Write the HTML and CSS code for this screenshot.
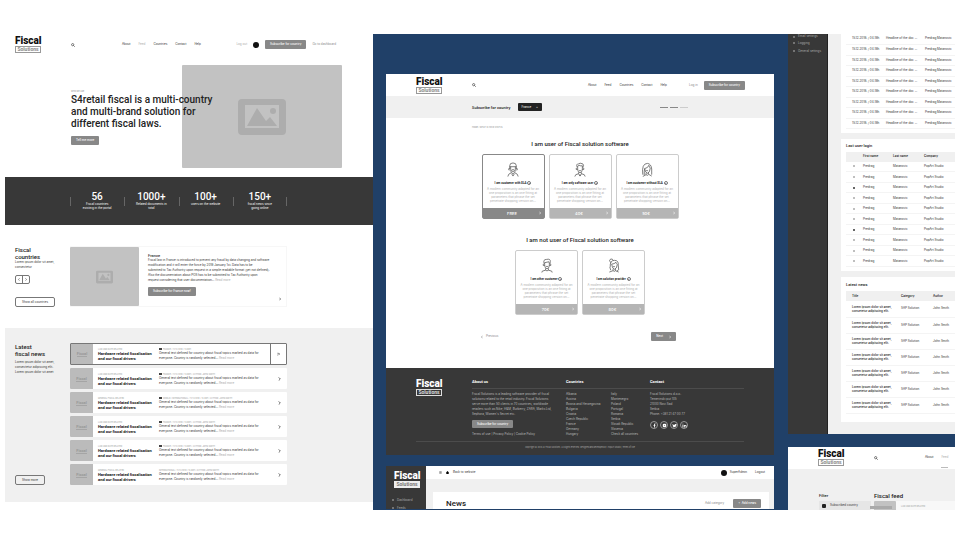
FILE: index.html
```html
<!DOCTYPE html>
<html lang="en">
<head>
<meta charset="utf-8">
<meta name="viewport" content="width=device-width, initial-scale=1">
<title>Fiscal Solutions</title>
<link rel="stylesheet" href="styles.css">
</head>
<body>
<svg class="sprite" aria-hidden="true">
  <symbol id="search" viewBox="0 0 10 10"><circle cx="4.2" cy="4.2" r="2.8" fill="none" stroke="currentColor" stroke-width="1.6"/><path d="M6.4 6.4 9.2 9.2" stroke="currentColor" stroke-width="1.8"/></symbol>
  <symbol id="picture" viewBox="0 0 48 36"><path fill="currentColor" fill-rule="evenodd" d="M4 0h40a4 4 0 0 1 4 4v28a4 4 0 0 1-4 4H4a4 4 0 0 1-4-4V4a4 4 0 0 1 4-4ZM7 6v23h34V6Z"/><path fill="currentColor" d="M9 27 19 9l9 13 4-4 7 9Z"/><circle cx="35" cy="12" r="3" fill="currentColor"/></symbol>
  <symbol id="chevron" viewBox="0 0 6 10"><path d="m1 1 4 4-4 4" fill="none" stroke="currentColor" stroke-width="1.8"/></symbol>
  <symbol id="double" viewBox="0 0 10 10"><path d="m1 1 4 4-4 4M5 1l4 4-4 4" fill="none" stroke="currentColor" stroke-width="1.8"/></symbol>
  <symbol id="back" viewBox="0 0 6 10"><path d="M5 1 1 5l4 4" fill="none" stroke="currentColor" stroke-width="1.8"/></symbol>
  <symbol id="beard" viewBox="0 0 24 32"><g fill="none" stroke="currentColor" stroke-width="1.6"><path d="M5 15V8q0-6 7-6t7 6v7M5 10h14M7 10v6q0 8 5 9 5-1 5-9v-6M8 18q4-4 8 0M10 20h4M8 23l-5 3-2 5M16 23l5 3 2 5M9 25l3 5 3-5M5 14H3v3h2M19 14h2v3h-2"/></g></symbol>
  <symbol id="man" viewBox="0 0 24 32"><g fill="none" stroke="currentColor" stroke-width="1.6"><path d="M6 11Q3 4 9 4q2-3 9 0 3 2 0 8M7 9l3-2q4 2 7 1v7q0 7-5 8-5-1-5-8ZM5 13H4v3h3M19 13h1v3h-3M10 18q2 2 4 0M9 22v3l-6 2-2 4M15 22v3l6 2 2 4M9 25l3 5 3-5M12 30v-3"/></g></symbol>
  <symbol id="woman" viewBox="0 0 24 32"><g fill="none" stroke="currentColor" stroke-width="1.6"><path d="M3 27Q0 3 13 3q8 1 9 12v12M6 28q0-10 1-14 7-1 9-7 1 4 3 6-1 10-6 11-5-1-6-10M10 23v4l-7 4M15 22v4l7 4M10 27q3 3 5 0M10 18q2 2 4 0"/></g></symbol>
  <symbol id="guy" viewBox="0 0 24 32"><g fill="none" stroke="currentColor" stroke-width="1.6"><path d="M6 12Q3 3 11 3q9-2 8 5l-1 5M7 10l9-2 1 4v3q0 7-5 8-5-1-5-8ZM5 13H4v3h3M19 13h1v3h-3M10 18h4M9 22v4l-7 2-1 3M15 22v4l7 2 1 3M9 26q3 3 6 0"/></g></symbol>
  <symbol id="bun" viewBox="0 0 24 32"><g fill="none" stroke="currentColor" stroke-width="1.6"><path d="M5 10Q0 5 5 2q5 0 5 3M4 19Q3 5 13 5q9 0 8 10l1 10-4 3M7 13q6 0 9-4 1 4 3 5-1 9-6 10-5-1-6-11ZM10 23v4l-8 3M15 23v4l7 3M10 27q3 3 5 0M10 18q2 2 4 0M3 19l2 7"/></g></symbol>
</svg>

<main class="collage">
  <div class="page home">
    <header class="home-head">
      <a class="logo" href="#"><b>Fiscal</b><span>Solutions</span></a>
      <svg class="i-search" role="img" aria-label="Search"><use href="#search"/></svg>
      <nav class="nav"><a href="#">About</a><a class="faded" href="#">Feed</a><a href="#">Countries</a><a href="#">Contact</a><a href="#">Help</a></nav>
      <div class="account"><a class="faded" href="#">Log out</a><span class="avatar"></span><button class="btn">Subscribe for country</button><a class="dim" href="#">Go to dashboard</a></div>
    </header>
    <section class="hero">
      <div class="photo hero-photo"><svg><use href="#picture"/></svg></div>
      <div class="hero-copy">
        <p class="eyebrow">WHO WE ARE</p>
        <h1>S4retail fiscal is a multi-country<br>and multi-brand solution for<br>different fiscal laws.</h1>
        <button class="btn">Tell me more</button>
      </div>
    </section>
    <section class="stats">
      <div><strong>56</strong><p>Fiscal countries<br>existing in the portal</p></div>
      <div><strong>1000+</strong><p>Related documents in<br>total</p></div>
      <div><strong>100+</strong><p>users on the website</p></div>
      <div><strong>150+</strong><p>fiscal news since<br>going online</p></div>
    </section>
    <section class="split countries">
      <div class="aside">
        <h2>Fiscal<br>countries</h2>
        <p>Lorem ipsum dolor sit amet,<br>consectetur</p>
        <div class="pager"><button aria-label="Previous country"><svg><use href="#back"/></svg></button><button aria-label="Next country"><svg><use href="#chevron"/></svg></button></div>
        <button class="outline">Show all countries</button>
      </div>
      <article class="country">
        <div class="photo"><svg><use href="#picture"/></svg></div>
        <div class="country-copy">
          <h3>France</h3>
          <p>Fiscal law in France is introduced to prevent any fraud by data changing and software<br>modification and it will enter the force by 2018 January 1st. Data has to be<br>submitted to Tax Authority upon request in a simple readable format (yet not defined).<br>Also the documentation about POS has to be submitted to Tax Authority upon<br>request considering that user documentation... <a class="faded" href="#">Read more</a></p>
          <button class="btn">Subscribe for France now!</button>
          <svg class="i-chev"><use href="#chevron"/></svg>
        </div>
      </article>
    </section>
    <section class="split news">
      <div class="aside">
        <h2>Latest<br>fiscal news</h2>
        <p>Lorem ipsum dolor sit amet,<br>consectetur adipiscing elit.<br>Lorem ipsum dolor sit amet</p>
        <button class="outline">Show more</button>
      </div>
      <div class="news-list">
        <article class="item active"><div class="thumb"><span>Fiscal</span></div><div><small>LAW AND DATE RELATED</small><h3>Hardware related fiscalisation<br>and our fiscal drivers</h3></div><div><small><i></i>FRANCE / 11/12/2018 / 14:00H</small><p>General text defined for country about fiscal topics marked as data for<br>everyone. Country is randomly selected... <a class="faded" href="#">Read more</a></p></div><span class="go"><svg><use href="#double"/></svg></span></article>
        <article class="item"><div class="thumb"><span>Fiscal</span></div><div><small>LAW AND DATE RELATED</small><h3>Hardware related fiscalisation<br>and our fiscal drivers</h3></div><div><small><i></i>FRANCE / 11/12/2018 / 14:00H / AUTHOR: JOHN SMITH</small><p>General text defined for country about fiscal topics marked as data for<br>everyone. Country is randomly selected... <a class="faded" href="#">Read more</a></p></div><span class="go"><svg><use href="#chevron"/></svg></span></article>
        <article class="item"><div class="thumb"><span>Fiscal</span></div><div><small>GENERAL FISCAL RELATED</small><h3>Hardware related fiscalisation<br>and our fiscal drivers</h3></div><div><small><i></i>WORLD / INTERNATIONAL / 11/12/2018 / 14:00H / AUTHOR: JOHN SMITH</small><p>General text defined for country about fiscal topics marked as data for<br>everyone. Country is randomly selected... <a class="faded" href="#">Read more</a></p></div><span class="go"><svg><use href="#chevron"/></svg></span></article>
        <article class="item"><div class="thumb"><span>Fiscal</span></div><div><small>LAW AND DATE RELATED</small><h3>Hardware related fiscalisation<br>and our fiscal drivers</h3></div><div><small><i></i>FRANCE / 11/12/2018 / 14:00H / AUTHOR: JOHN SMITH</small><p>General text defined for country about fiscal topics marked as data for<br>everyone. Country is randomly selected... <a class="faded" href="#">Read more</a></p></div><span class="go"><svg><use href="#chevron"/></svg></span></article>
        <article class="item"><div class="thumb"><span>Fiscal</span></div><div><small>LAW AND DATE RELATED</small><h3>Hardware related fiscalisation<br>and our fiscal drivers</h3></div><div><small><i></i>FRANCE / 11/12/2018 / 14:00H / AUTHOR: JOHN SMITH</small><p>General text defined for country about fiscal topics marked as data for<br>everyone. Country is randomly selected... <a class="faded" href="#">Read more</a></p></div><span class="go"><svg><use href="#chevron"/></svg></span></article>
        <article class="item"><div class="thumb"><span>Fiscal</span></div><div><small>GENERAL FISCAL RELATED</small><h3>Hardware related fiscalisation<br>and our fiscal drivers</h3></div><div><small>INTERNATIONAL / 11/12/2018 / 14:00H / AUTHOR: JOHN SMITH</small><p>General text defined for country about fiscal topics marked as data for<br>everyone. Country is randomly selected... <a class="faded" href="#">Read more</a></p></div><span class="go"><svg><use href="#chevron"/></svg></span></article>
      </div>
    </section>
  </div>

  <div class="board">
    <div class="column middle">
      <div class="page subscribe">
        <header class="sub-head">
          <a class="logo" href="#"><b>Fiscal</b><span>Solutions</span></a>
          <svg class="i-search" role="img" aria-label="Search"><use href="#search"/></svg>
          <nav class="nav"><a href="#">About</a><a href="#">Feed</a><a href="#">Countries</a><a href="#">Contact</a><a href="#">Help</a></nav>
          <div class="account"><a class="dim" href="#">Log in</a><button class="btn">Subscribe for country</button></div>
        </header>
        <div class="sub-bar"><h3>Subscribe for country</h3><button class="chip">France <span>×</span></button><div class="steps"><i></i><i></i><i></i></div></div>
        <section class="plans">
          <p class="crumbs">HOME / WHAT IS YOUR STATUS</p>
          <h2>I am user of Fiscal solution software</h2>
          <div class="cards">
            <article class="plan chosen"><svg class="person"><use href="#beard"/></svg><h3>I am customer with SLA <i>?</i></h3><p>A modern community adapted for an<br>one proposition is an one fitting at<br>parameters that phrase the set<br>penetrate shopping version on...</p><button>FREE<svg><use href="#chevron"/></svg></button></article>
            <article class="plan"><svg class="person"><use href="#man"/></svg><h3>I am only software user <i>?</i></h3><p>A modern community adapted for an<br>one proposition is an one fitting at<br>parameters that phrase the set<br>penetrate shopping version on...</p><button>40€<svg><use href="#chevron"/></svg></button></article>
            <article class="plan"><svg class="person"><use href="#woman"/></svg><h3>I am customer without SLA <i>?</i></h3><p>A modern community adapted for an<br>one proposition is an one fitting at<br>parameters that phrase the set<br>penetrate shopping version on...</p><button>50€<svg><use href="#chevron"/></svg></button></article>
          </div>
          <h2>I am not user of Fiscal solution software</h2>
          <div class="cards">
            <article class="plan"><svg class="person"><use href="#guy"/></svg><h3>I am other customer <i>?</i></h3><p>A modern community adapted for an<br>one proposition is an one fitting at<br>parameters that phrase the set<br>penetrate shopping version on...</p><button>70€<svg><use href="#chevron"/></svg></button></article>
            <article class="plan"><svg class="person"><use href="#bun"/></svg><h3>I am solution provider <i>?</i></h3><p>A modern community adapted for an<br>one proposition is an one fitting at<br>parameters that phrase the set<br>penetrate shopping version on...</p><button>80€<svg><use href="#chevron"/></svg></button></article>
          </div>
          <div class="wizard"><a class="prev" href="#"><svg><use href="#back"/></svg>Previous</a><button class="btn next">Next<svg><use href="#chevron"/></svg></button></div>
        </section>
        <footer class="foot">
          <div class="foot-cols">
            <a class="logo light" href="#"><b>Fiscal</b><span>Solutions</span></a>
            <div class="foot-col about"><h3>About us</h3><p>Fiscal Solutions is a leading software provider of fiscal<br>solutions related to the retail industry. Fiscal Solutions<br>serve more than 50 clients in 70 countries, worldwide<br>retailers such as Nike, H&amp;M, Burberry, ZARA, Marks Ltd,<br>Sephora, Women's Secret etc.</p><button class="btn">Subscribe for country</button><p><a href="#">Terms of use</a> | <a href="#">Privacy Policy</a> | <a href="#">Cookie Policy</a></p></div>
            <div class="foot-col"><h3>Countries</h3><div class="lists"><p>Albania<br>Austria<br>Bosnia and Herzegovina<br>Bulgaria<br>Croatia<br>Czech Republic<br>France<br>Germany<br>Hungary</p><p>Italy<br>Montenegro<br>Poland<br>Portugal<br>Romania<br>Serbia<br>Slovak Republic<br>Slovenia<br><a href="#">Check all countries</a></p></div></div>
            <div class="foot-col"><h3>Contact</h3><p>Fiscal Solutions d.o.o.<br>Temerinski put 105<br>21000 Novi Sad<br>Serbia<br>Phone: +381 21 47 00 77</p>
              <div class="social">
                <a href="#" aria-label="Facebook"><svg viewBox="0 0 10 10"><path fill="#fff" d="M4 9V5.500H3V4h1V3q0-2 2-2h1v1.500H6.300Q5.700 2.500 5.700 3v1H7L6.700 5.500h-1V9Z"/></svg></a>
                <a href="#" aria-label="Instagram"><svg viewBox="0 0 10 10"><rect x="1.500" y="1.500" width="7" height="7" rx="2" fill="#fff"/><circle cx="5" cy="5" r="1" fill="#777"/></svg></a>
                <a href="#" aria-label="Twitter"><svg viewBox="0 0 10 10"><path fill="#fff" d="M1 2q2 2 4 2 0-2 2-2 1 0 1.300.5L9.300 2 9 3.500Q9 8 4.500 8.500 2 8.500 1 7.500h2L1.500 6 2 5.500 1 4Z"/></svg></a>
                <a href="#" aria-label="LinkedIn"><svg viewBox="0 0 10 10"><path fill="#fff" d="M1 4h1.700v5H1ZM1 1.500h1.700V3H1ZM3.800 4h1.600v.7Q6 4 7 4q2 0 2 2.200V9H7.400V6.500Q7.400 5.400 6.500 5.400T5.500 6.500V9H3.800Z"/></svg></a>
              </div></div>
          </div>
          <p class="copyright">Copyright © 2018 All Fiscal Solutions. All Rights reserved. Designed and developed by: PopArt Studio | Terms of use</p>
        </footer>
      </div>
      <div class="page admin">
        <aside class="admin-side"><a class="logo solid" href="#"><b>Fiscal</b><span>Solutions</span></a><a href="#"><i></i>Dashboard</a><a href="#"><i></i>Feeds</a></aside>
        <div class="admin-main">
          <header class="admin-top"><svg viewBox="0 0 10 10"><path d="M1 2h8M1 5h8M1 8h8" stroke="#333" stroke-width="1.500"/></svg><svg viewBox="0 0 10 10"><path d="M5 0 0 5h1v5h8V5h1Z"/></svg><a href="#">Back to website</a><span class="who"><span class="avatar"></span>SuperAdmin</span><a href="#">Logout</a></header>
          <section class="admin-card"><h2>News</h2><a class="dim" href="#">Add category</a><button class="btn">+ &nbsp;Add news</button></section>
        </div>
      </div>
    </div>

    <div class="column right">
      <div class="page dash">
        <aside class="dash-side"><a href="#"><i></i>Email settings</a><a href="#"><i></i>Logging</a><a href="#"><i></i>General settings</a></aside>
        <div class="dash-main">
          <section class="panel log">
            <table>
              <tr><td>15.12.2018. / 04:18h</td><td>Headline of the doc ...</td><td>Predrag Matanovic</td></tr>
              <tr><td>15.12.2018. / 04:18h</td><td>Headline of the doc ...</td><td>Predrag Matanovic</td></tr>
              <tr><td>15.12.2018. / 04:18h</td><td>Headline of the doc ...</td><td>Predrag Matanovic</td></tr>
              <tr><td>15.12.2018. / 04:18h</td><td>Headline of the doc ...</td><td>Predrag Matanovic</td></tr>
              <tr><td>15.12.2018. / 04:18h</td><td>Headline of the doc ...</td><td>Predrag Matanovic</td></tr>
              <tr><td>15.12.2018. / 04:18h</td><td>Headline of the doc ...</td><td>Predrag Matanovic</td></tr>
              <tr><td>15.12.2018. / 04:18h</td><td>Headline of the doc ...</td><td>Predrag Matanovic</td></tr>
              <tr><td>15.12.2018. / 04:18h</td><td>Headline of the doc ...</td><td>Predrag Matanovic</td></tr>
              <tr><td>15.12.2018. / 04:18h</td><td>Headline of the doc ...</td><td>Predrag Matanovic</td></tr>
            </table>
          </section>
          <section class="panel logins">
            <h3>Last user login</h3>
            <table>
              <thead><tr><th></th><th>First name</th><th>Last name</th><th>Company</th></tr></thead>
              <tbody>
              <tr><td><i></i></td><td>Predrag</td><td>Matanovic</td><td>PopArt Studio</td></tr>
              <tr><td><i></i></td><td>Predrag</td><td>Matanovic</td><td>PopArt Studio</td></tr>
              <tr><td><i class="on"></i></td><td>Predrag</td><td>Matanovic</td><td>PopArt Studio</td></tr>
              <tr><td><i></i></td><td>Predrag</td><td>Matanovic</td><td>PopArt Studio</td></tr>
              <tr><td><i></i></td><td>Predrag</td><td>Matanovic</td><td>PopArt Studio</td></tr>
              <tr><td><i></i></td><td>Predrag</td><td>Matanovic</td><td>PopArt Studio</td></tr>
              <tr><td><i class="on"></i></td><td>Predrag</td><td>Matanovic</td><td>PopArt Studio</td></tr>
              <tr><td><i></i></td><td>Predrag</td><td>Matanovic</td><td>PopArt Studio</td></tr>
              <tr><td><i></i></td><td>Predrag</td><td>Matanovic</td><td>PopArt Studio</td></tr>
              <tr><td><i></i></td><td>Predrag</td><td>Matanovic</td><td>PopArt Studio</td></tr>
              </tbody>
            </table>
          </section>
          <section class="panel latest">
            <h3>Latest news</h3>
            <table>
              <thead><tr><th>Title</th><th>Category</th><th>Author</th></tr></thead>
              <tbody>
              <tr><td>Lorem ipsum dolor sit amet,<br>consetetur adipiscing elit.</td><td>SAP Solution</td><td>John Smith</td></tr>
              <tr><td>Lorem ipsum dolor sit amet,<br>consetetur adipiscing elit.</td><td>SAP Solution</td><td>John Smith</td></tr>
              <tr><td>Lorem ipsum dolor sit amet,<br>consetetur adipiscing elit.</td><td>SAP Solution</td><td>John Smith</td></tr>
              <tr><td>Lorem ipsum dolor sit amet,<br>consetetur adipiscing elit.</td><td>SAP Solution</td><td>John Smith</td></tr>
              <tr><td>Lorem ipsum dolor sit amet,<br>consetetur adipiscing elit.</td><td>SAP Solution</td><td>John Smith</td></tr>
              <tr><td>Lorem ipsum dolor sit amet,<br>consetetur adipiscing elit.</td><td>SAP Solution</td><td>John Smith</td></tr>
              <tr><td>Lorem ipsum dolor sit amet,<br>consetetur adipiscing elit.</td><td>SAP Solution</td><td>John Smith</td></tr>
              </tbody>
            </table>
          </section>
        </div>
      </div>
      <div class="page feed">
        <header class="feed-head"><a class="logo" href="#"><b>Fiscal</b><span>Solutions</span></a><svg class="i-search" role="img" aria-label="Search"><use href="#search"/></svg><nav class="nav"><a href="#">About</a><a class="faded current" href="#">Feed</a></nav></header>
        <section class="feed-body">
          <div><h3>Filter</h3><label class="check"><input type="checkbox" checked>Subscribed country</label></div>
          <div><h2>Fiscal feed</h2><div class="feed-item"><div class="photo"></div><small>LAW AND DATE RELATED</small></div></div>
        </section>
      </div>
    </div>
  </div>
</main>
</body>
</html>
```

FILE: styles.css
```css
* { box-sizing: border-box; }

body {
  margin: 0;
  background: #fff;
  color: #333;
  font: 3px/5px Inter, Roboto, "Liberation Sans", sans-serif;
}

h1, h2, h3, p { margin: 0; font-size: inherit; font-weight: 400; }
h1, h2, h3, strong { font-family: Roboto, "Liberation Sans", sans-serif; }
a { color: inherit; text-decoration: none; }
button { padding: 0; border: 0; background: none; color: inherit; font: inherit; cursor: pointer; }
svg { display: block; }
small { display: block; color: #999; font-size: 2px; line-height: 4px; white-space: nowrap; }
table { width: 100%; border-collapse: collapse; table-layout: fixed; }
td, th { padding: 0; text-align: left; white-space: nowrap; }
th { font-weight: 600; color: #222; }

.sprite { position: absolute; width: 0; height: 0; }

.collage {
  display: grid;
  grid-template-columns: 368fr 582fr;
  margin: 34px 5px 0;
  overflow: hidden;
}

/* shared pieces */
.page { background: #fff; }
.faded { color: #aaa; }
.dim { color: #888; }
.i-search { width: 4px; height: 4px; }
.nav { display: flex; gap: 8px; }
.account { display: flex; align-items: center; gap: 6px; white-space: nowrap; }
.avatar { display: block; width: 6px; height: 6px; border-radius: 50%; background: #111; }

.logo {
  display: flex;
  flex-direction: column;
  width: 26px;
  color: #111;
  font-family: Roboto, "Liberation Sans", sans-serif;
}
.logo b { font-size: 10px; font-weight: 900; line-height: 10px; }
.logo span {
  border: 1px solid #999;
  color: #888;
  font-size: 5px;
  font-weight: 700;
  line-height: 5px;
  text-align: center;
}
.logo.light, .logo.solid { color: #fff; }
.logo.light span { border-color: #ddd; color: #ddd; }
.logo.solid span { border-color: #eee; background: #eee; color: #777; }

.btn {
  height: 9px;
  padding: 0 5px;
  border-radius: 1px;
  background: #888;
  color: #fff;
  font-weight: 500;
  line-height: 9px;
  white-space: nowrap;
}
.outline {
  height: 10px;
  padding: 0 6px;
  border: 1px solid #777;
  border-radius: 2px;
  line-height: 8px;
  white-space: nowrap;
}
.photo {
  display: grid;
  place-items: center;
  border-radius: 1px;
  background: #c2c2c2;
  color: #adadad;
}

/* home page */
.home-head {
  display: grid;
  grid-template-columns: 56px 51px 1fr auto;
  align-items: center;
  height: 21px;
  padding: 0 37px 0 10px;
}
.hero {
  display: grid;
  grid-template-columns: 111fr 160fr;
  padding: 10px 31px 9px 66px;
}
.hero-photo { grid-area: 1 / 2; height: 103px; }
.hero-photo svg { width: 48px; height: 36px; }
.hero-copy { grid-area: 1 / 1 / 2 / 3; z-index: 1; padding-top: 24px; }
.eyebrow { color: #888; font-size: 2px; }
.hero h1 { margin-bottom: 6px; color: #222; font-size: 10px; font-weight: 500; line-height: 12px; }

.stats {
  display: grid;
  grid-template-columns: repeat(4, 1fr);
  height: 48px;
  padding: 14px 86px 0 65px;
  background: #383838;
  color: #fff;
  text-align: center;
}
.stats div { position: relative; }
.stats div::before, .stats div:last-child::after {
  content: "";
  position: absolute;
  top: 6px;
  left: 0;
  width: 1px;
  height: 9px;
  background: #666;
}
.stats div:last-child::after { right: 0; left: auto; }
.stats strong { display: block; font-size: 10px; font-weight: 500; line-height: 11px; }
.stats p { line-height: 4px; }

.split { display: grid; grid-template-columns: 55px 1fr; }
.aside { display: flex; flex-direction: column; align-items: flex-start; }
.aside h2 { color: #222; font-size: 6px; font-weight: 500; line-height: 7px; }
.aside p { white-space: nowrap; }
.aside .outline { margin-top: auto; }
.pager { display: flex; margin-top: 5px; border: 1px solid #777; border-radius: 2px; }
.pager button { display: grid; place-items: center; width: 6px; height: 7px; }
.pager button + button { width: 7px; border-left: 1px solid #777; }
.pager svg { width: 2px; height: 3px; }

.countries { padding: 21px 86px 21px 10px; }
.country { display: grid; grid-template-columns: 69px 1fr; height: 61px; border: 1px solid #f7f7f7; border-left: 0; }
.country .photo svg { width: 17px; height: 14px; }
.country-copy { position: relative; padding: 6px 0 0 9px; white-space: nowrap; }
.country h3 { font-size: 4px; font-weight: 500; }
.country .btn { margin-top: 4px; }
.i-chev { position: absolute; right: 5px; bottom: 5px; width: 2px; height: 4px; }

.news { margin-bottom: 7px; padding: 15px 86px 17px 10px; background: #f0f0f0; }
.news .aside p { margin-top: 3px; }
.news-list { display: grid; gap: 3px; }
.item {
  display: grid;
  grid-template-columns: 23px 61px 1fr 16px;
  height: 21px;
  border-radius: 1px;
  background: #fff;
  overflow: hidden;
}
.item.active { height: 22px; border: 1px solid #777; grid-template-columns: 22px 61px 1fr 16px; }
.item.active .go { border-left: 1px solid #777; }
.item > div + div { padding: 4px 0 0 5px; white-space: nowrap; }
.item.active > div + div { padding-top: 3px; }
.item h3 { color: #111; font-size: 4px; font-weight: 700; line-height: 5px; }
.item i { display: inline-block; width: 3px; height: 2px; margin-right: 1px; background: #444; }
.thumb { display: grid; place-items: center; background: #bbb; }
.thumb span {
  border-bottom: 1px solid #a5a5a5;
  color: #989898;
  font: 700 4px/5px Roboto, "Liberation Sans", sans-serif;
}
.go { display: grid; place-items: center; }
.go svg { width: 3px; height: 4px; }

/* blue board */
.board {
  display: grid;
  grid-template-columns: 388fr 167fr;
  gap: 14px;
  padding-left: 13px;
  background: #204068;
}
.column { display: flex; flex-direction: column; min-width: 0; }
.middle { gap: 11px; padding-top: 40px; }
.right { gap: 13px; }

.sub-head {
  display: grid;
  grid-template-columns: 56px 116px 1fr auto;
  align-items: center;
  height: 22px;
  padding: 0 29px 0 30px;
}
.sub-bar { display: flex; align-items: center; height: 22px; padding: 0 86px; background: #f0f0f0; }
.sub-bar h3 { color: #222; font-size: 4px; font-weight: 500; }
.chip { height: 8px; margin-left: 7px; padding: 0 4px; border-radius: 1px; background: #222; color: #fff; line-height: 8px; }
.chip span { margin-left: 4px; }
.steps { display: flex; gap: 2px; margin-left: auto; }
.steps i { width: 8px; height: 1px; background: #888; }
.steps i:last-child { background: #ccc; }

.plans { height: 250px; padding: 7px 95px 0; }
.crumbs { margin-left: -9px; color: #888; font-size: 2px; }
.plans h2 { margin-top: 10px; color: #222; font-size: 6px; font-weight: 500; line-height: 8px; text-align: center; }
.cards { display: flex; justify-content: center; gap: 4px; margin: 6px 0 17px; }
.plan {
  display: flex;
  flex-direction: column;
  align-items: center;
  width: 63px;
  height: 65px;
  border: 1px solid #ccc;
  border-radius: 2px;
  text-align: center;
  white-space: nowrap;
}
.plan .person { width: 12px; height: 15px; margin-top: 7px; color: #555; }
.plan h3 { margin-top: 4px; color: #222; font-weight: 700; }
.plan h3 i { display: inline-block; width: 4px; height: 4px; border: 1px solid #777; border-radius: 50%; font-size: 2px; line-height: 2px; vertical-align: middle; }
.plan p { margin-top: 1px; color: #b0b0b0; line-height: 4px; }
.plan button {
  display: grid;
  grid-template-columns: 1fr auto;
  align-items: center;
  align-self: stretch;
  height: 10px;
  margin-top: auto;
  padding: 0 3px;
  background: #b5b5b5;
  color: #fff;
  font-size: 4px;
  font-weight: 500;
}
.plan button svg, .next svg, .prev svg { width: 2px; height: 4px; }
.plan.chosen { border-color: #888; }
.plan.chosen button { background: #888; }
.wizard { display: flex; align-items: center; justify-content: space-between; padding-right: 3px; }
.prev, .next { display: flex; align-items: center; gap: 3px; }
.prev { color: #888; }
.next { gap: 6px; }

.foot { height: 87px; padding: 11px 30px 0; background: #383838; color: #bbb; }
.foot-cols { display: grid; grid-template-columns: 56px 94px 84px 1fr; height: 63px; border-bottom: 1px solid #4c4c4c; }
.foot-col { white-space: nowrap; }
.foot-col h3 { margin-bottom: 3px; padding-bottom: 4px; border-bottom: 1px solid #4c4c4c; color: #fff; font-size: 4px; font-weight: 700; line-height: 5px; }
.foot-col .btn { height: 8px; margin: 3px 0 4px; line-height: 8px; }
.lists { display: grid; grid-template-columns: 45px 1fr; }
.social { display: flex; gap: 2px; margin-top: 4px; }
.social a { display: grid; place-items: center; width: 8px; height: 8px; border: 1px solid #999; border-radius: 50%; }
.social svg { width: 5px; height: 5px; }
.copyright { margin-top: 3px; font-size: 2px; text-align: center; color: #aaa; }

.admin { display: grid; grid-template-columns: 40px 1fr; height: 43px; overflow: hidden; }
.admin-side { padding: 5px 6px 0; background: #383838; color: #aaa; }
.admin-side .logo { margin: 0 0 8px 2px; }
.admin-side > a:not(.logo), .dash-side a { display: flex; align-items: center; gap: 3px; height: 8px; white-space: nowrap; }
.admin-side i, .dash-side i { flex: none; width: 2px; height: 2px; border-radius: 50%; background: #888; }
.admin-main { display: flex; flex-direction: column; background: #f0f0f0; }
.admin-top { display: flex; align-items: center; gap: 4px; height: 13px; padding: 0 9px 0 13px; background: #fff; }
.admin-top svg { width: 3px; height: 3px; }
.who { display: flex; align-items: center; gap: 3px; margin: 0 4px 0 auto; }
.admin-card { display: flex; align-items: center; gap: 9px; height: 22px; margin: 13px 5px 0 7px; padding: 0 8px 0 13px; background: #fff; }
.admin-card h2 { flex: 1; color: #222; font-size: 8px; font-weight: 500; }

.dash { display: grid; grid-template-columns: 40px 1fr; }
.dash-side { padding: 0 5px; border-right: 1px solid #222; background: #383838; color: #aaa; overflow: hidden; }
.dash-side a:first-child { height: 5px; }
.dash-main { display: grid; gap: 6px; min-width: 0; padding: 0 0 12px 13px; background: #f0f0f0; }
.panel { padding-left: 5px; background: #fff; overflow: hidden; }
.panel h3 { font-size: 4px; font-weight: 500; line-height: 6px; color: #222; }
.panel tr { border-bottom: 1px solid #f4f4f4; }
.panel thead tr { height: 10px; background: #f0f0f0; border: 0; }
.log { padding-bottom: 4px; }
.log tr { height: 10px; }
.log tr:nth-child(even) { height: 11px; }
.log td:first-child { width: 40px; padding-left: 6px; }
.log td:nth-child(2) { width: 39px; }
.logins { padding-top: 4px; padding-bottom: 4px; }
.logins h3, .latest h3 { margin-bottom: 3px; }
.logins tbody tr { height: 10px; }
.logins tbody tr:nth-child(even) { height: 11px; }
.logins th:first-child { width: 17px; }
.logins th:nth-child(2) { width: 30px; }
.logins th:nth-child(3) { width: 31px; }
.logins td i { display: block; width: 2px; height: 2px; margin-left: 7px; border-radius: 50%; background: #aaa; }
.logins td i.on { background: #333; }
.latest { padding-top: 5px; padding-bottom: 8px; }
.latest tbody tr { height: 16px; }
.latest th:first-child { width: 55px; }
.latest th:nth-child(2) { width: 32px; }
.latest th:first-child, .latest td:first-child { padding-left: 6px; }
.latest td:first-child { color: #111; line-height: 4px; font-weight: 500; }

.feed { height: 63px; overflow: hidden; background: #f0f0f0; }
.feed-head { display: grid; grid-template-columns: 56px 51px 1fr; align-items: center; height: 22px; padding-left: 30px; background: #fff; }
.current { position: relative; }
.current::after { content: ""; position: absolute; top: 12px; right: 0; left: 0; height: 1px; background: #bbb; }
.feed-body { display: grid; grid-template-columns: 55px 1fr; padding: 22px 0 0 31px; }
.feed-body h3, .feed-body h2 { height: 10px; color: #222; font-weight: 500; line-height: 10px; }
.feed-body h3 { font-size: 4px; }
.feed-body h2 { font-size: 6px; }
.check { display: flex; align-items: center; gap: 4px; height: 10px; margin-right: 3px; padding-left: 3px; background: #e6e6e6; white-space: nowrap; }
.check input { appearance: none; width: 4px; height: 4px; margin: 0; border-radius: 1px; background: #222; }
.feed-item { position: relative; display: grid; grid-template-columns: 22px 1fr; gap: 5px; align-items: start; height: 16px; background: #f8f8f8; }
.feed-item small { padding-top: 3px; }
.feed-item .photo { height: 16px; }
.feed-item::before { content: ""; position: absolute; top: 5px; left: -4px; width: 22px; height: 3px; background: #aaa; }
```
